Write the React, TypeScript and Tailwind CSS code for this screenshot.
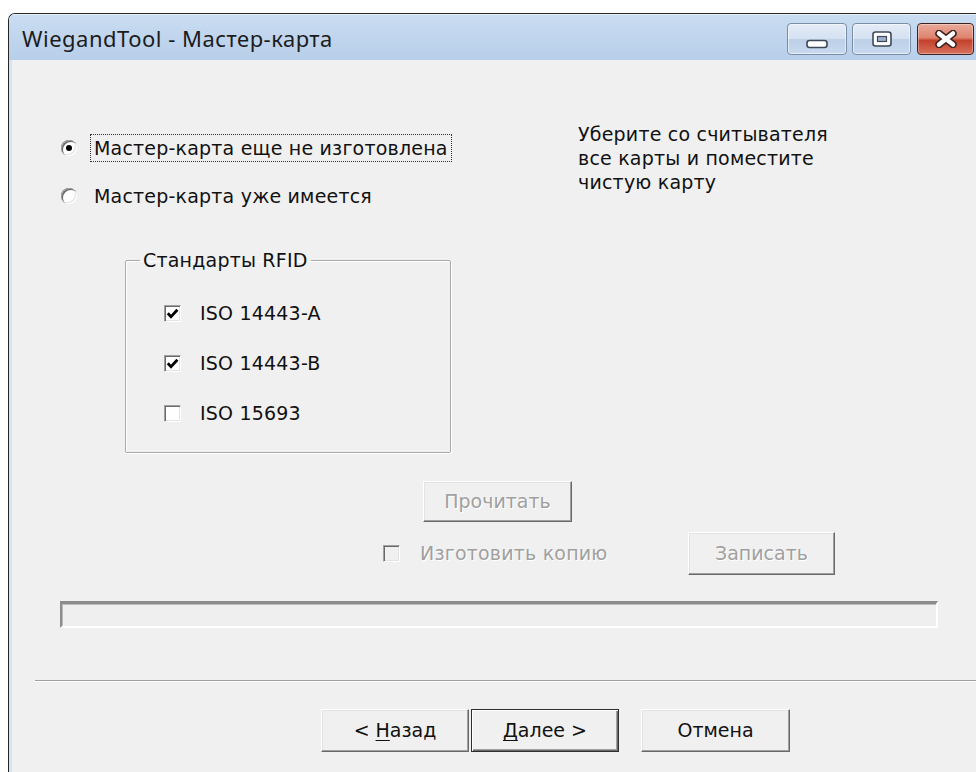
import clsx from "clsx";
import type { ReactNode } from "react";

// classic 3D control edges
const raised =
  "border border-t-white border-l-white border-r-[#696969] border-b-[#696969] shadow-[inset_-1px_-1px_0_#a0a0a0,inset_1px_1px_0_#e3e3e3]";
const sunken =
  "border border-t-[#a0a0a0] border-l-[#a0a0a0] border-r-white border-b-white shadow-[inset_1px_1px_0_#696969,inset_-1px_-1px_0_#e3e3e3]";
const grayText = "text-[#a0a0a0] [text-shadow:1px_1px_0_#fff]";

const CaptionButtons = function () {
  return (
    <div className="ml-auto mt-[9px] flex">
      <div className="flex h-[32px] w-[60px] items-end justify-center rounded-[4px] border border-[#7a8da8] bg-[linear-gradient(to_bottom,#e4ecf7_0%,#d5e2f1_48%,#bdd0e8_52%,#c9daef_100%)] pb-[5px] shadow-[inset_0_0_0_1px_rgba(255,255,255,0.55)]">
        <svg width="22" height="10" viewBox="0 0 22 10">
          <rect x="1" y="1.5" width="20" height="7" rx="2.5" fill="#fff" stroke="#3d4959" strokeWidth="1.6" />
        </svg>
      </div>
      <div className="ml-[5px] flex h-[32px] w-[59px] items-center justify-center rounded-[4px] border border-[#7a8da8] bg-[linear-gradient(to_bottom,#e4ecf7_0%,#d5e2f1_48%,#bdd0e8_52%,#c9daef_100%)] shadow-[inset_0_0_0_1px_rgba(255,255,255,0.55)]">
        <svg width="20" height="16" viewBox="0 0 20 16">
          <rect x="1" y="1" width="18" height="14" rx="2.5" fill="#fff" stroke="#3d4959" strokeWidth="1.6" />
          <rect x="5.5" y="5.5" width="9" height="5" fill="#9db2cc" stroke="#3d4959" strokeWidth="1.2" />
        </svg>
      </div>
      <div className="ml-[6px] flex h-[32px] w-[57px] items-center justify-center rounded-[4px] border border-[#3e211c] bg-[linear-gradient(to_bottom,#eaa999_0%,#de8570_45%,#c4412c_55%,#d6725c_100%)] shadow-[inset_0_0_0_1px_rgba(255,255,255,0.35)]">
        <svg width="24" height="18" viewBox="0 0 24 18">
          <path d="M5 3.5 L19 14.5 M19 3.5 L5 14.5" stroke="#3a2522" strokeWidth="7.5" strokeLinecap="round" />
          <path d="M5 3.5 L19 14.5 M19 3.5 L5 14.5" stroke="#fff" strokeWidth="4.5" strokeLinecap="round" />
        </svg>
      </div>
    </div>
  );
};

const Radio = function ({ checked }: { checked?: boolean }) {
  return (
    <span className="flex h-[16px] w-[16px] shrink-0 items-center justify-center rounded-full bg-white shadow-[inset_1px_1px_0_#a0a0a0,inset_2px_2px_0_#696969,inset_-1px_-1px_0_#fff,inset_-2px_-2px_0_#e3e3e3]">
      {checked && <span className="h-[6px] w-[6px] rounded-full bg-black" />}
    </span>
  );
};

const CheckBox = function ({ checked, disabled }: { checked?: boolean; disabled?: boolean }) {
  return (
    <span
      className={clsx(
        "flex h-[17px] w-[17px] shrink-0 items-center justify-center",
        sunken,
        disabled ? "bg-[#f0f0f0]" : "bg-white"
      )}
    >
      {checked && (
        <svg width="13" height="13" viewBox="0 0 13 13">
          <polyline points="1.8,6.2 5,9.6 11.4,2.8" fill="none" stroke="#000" strokeWidth="2.8" />
        </svg>
      )}
    </span>
  );
};

const Button = function ({
  children,
  className,
  disabled,
  isDefault,
}: {
  children: ReactNode;
  className: string;
  disabled?: boolean;
  isDefault?: boolean;
}) {
  return (
    <div
      className={clsx(
        "flex items-center justify-center bg-[#f0f0f0] tracking-normal",
        isDefault
          ? "border border-[#2e2e2e] shadow-[inset_1px_1px_0_#fff,inset_-1px_-1px_0_#696969,inset_-2px_-2px_0_#a0a0a0]"
          : raised,
        disabled && grayText,
        className
      )}
    >
      {children}
    </div>
  );
};

const DialogBody = function () {
  return (
    <div className="flex flex-1 flex-col pt-[62px] text-[19px] tracking-[0.2px] text-[#111]">
      <div className="flex">
        <div className="ml-[49px] flex w-[517px] flex-col pt-[11px]">
          <div className="flex h-[30px] items-center">
            <Radio checked />
            <span className="ml-[13px] border border-dotted border-[#333] px-[3px] leading-[26px]">
              Мастер-карта еще не изготовлена
            </span>
          </div>
          <div className="mt-[18px] flex h-[30px] items-center">
            <Radio />
            <span className="ml-[13px] border border-transparent px-[3px] leading-[26px]">
              Мастер-карта уже имеется
            </span>
          </div>
        </div>
        <p className="leading-[24px]">
          Уберите со считывателя
          <br />
          все карты и поместите
          <br />
          чистую карту
        </p>
      </div>

      <fieldset className="ml-[113px] mt-[38px] h-[204px] w-[326px] rounded-[2px] border border-[#aaaaaa] shadow-[1px_1px_0_#fff,inset_1px_1px_0_#fff]">
        <legend className="ml-[14px] px-[3px] leading-[22px]">Стандарты RFID</legend>
        <div className="flex flex-col gap-[20px] pl-[38px] pt-[27px]">
          <div className="flex h-[30px] items-center">
            <CheckBox checked />
            <span className="ml-[19px]">ISO 14443-A</span>
          </div>
          <div className="flex h-[30px] items-center">
            <CheckBox checked />
            <span className="ml-[19px]">ISO 14443-B</span>
          </div>
          <div className="flex h-[30px] items-center">
            <CheckBox />
            <span className="ml-[19px]">ISO 15693</span>
          </div>
        </div>
      </fieldset>

      <Button disabled className="ml-[411px] mt-[28px] h-[41px] w-[149px]">
        Прочитать
      </Button>

      <div className="ml-[371px] mt-[10px] flex h-[43px] w-[452px] items-center">
        <CheckBox disabled />
        <span className={clsx("ml-[20px]", grayText)}>Изготовить копию</span>
        <Button disabled className="ml-auto h-[43px] w-[147px]">
          Записать
        </Button>
      </div>

      <div className="ml-[48px] mt-[26px] h-[27px] w-[878px] border-b-2 border-l-2 border-r-2 border-t-[3px] border-b-white border-l-[#8c8c8c] border-r-white border-t-[#8c8c8c] bg-[#efefef] shadow-[inset_1px_1px_0_#bdbdbd]" />

      <div className="ml-[23px] mt-[52px] h-[2px] border-b border-t border-b-white border-t-[#a0a0a0]" />

      <div className="ml-[309px] mt-[27px] flex">
        <Button className="h-[43px] w-[148px]">
          &lt; <span className="ml-[6px] underline underline-offset-[3px]">Н</span>азад
        </Button>
        <Button isDefault className="ml-[2px] h-[43px] w-[148px]">
          <span className="underline underline-offset-[3px]">Д</span>алее &gt;
        </Button>
        <Button className="ml-[22px] h-[43px] w-[149px]">Отмена</Button>
      </div>
    </div>
  );
};

const App = function () {
  return (
    <div className="h-[772px] w-[976px] overflow-hidden bg-white pl-[8px] pt-[13px] font-['DejaVu_Sans',sans-serif]">
      <div className="flex h-[790px] w-[990px] flex-col overflow-hidden rounded-tl-[7px] border-l border-t border-[#262626] bg-[#f0f0f0]">
        <div className="flex h-[46px] shrink-0 bg-[linear-gradient(to_bottom,#c9dcf1,#b8cfea)] pl-[13px] pr-[24px] shadow-[inset_0_1px_0_rgba(255,255,255,0.6)]">
          <span className="self-center pt-[2px] font-['Noto_Sans',sans-serif] text-[22px] tracking-[0.5px] text-[#1c1c1c]">
            WiegandTool - Мастер-карта
          </span>
          <CaptionButtons />
        </div>
        <div className="flex flex-1">
          <div className="w-[3px] bg-[#d6e3f1]" />
          <DialogBody />
        </div>
      </div>
    </div>
  );
};

export default App;
